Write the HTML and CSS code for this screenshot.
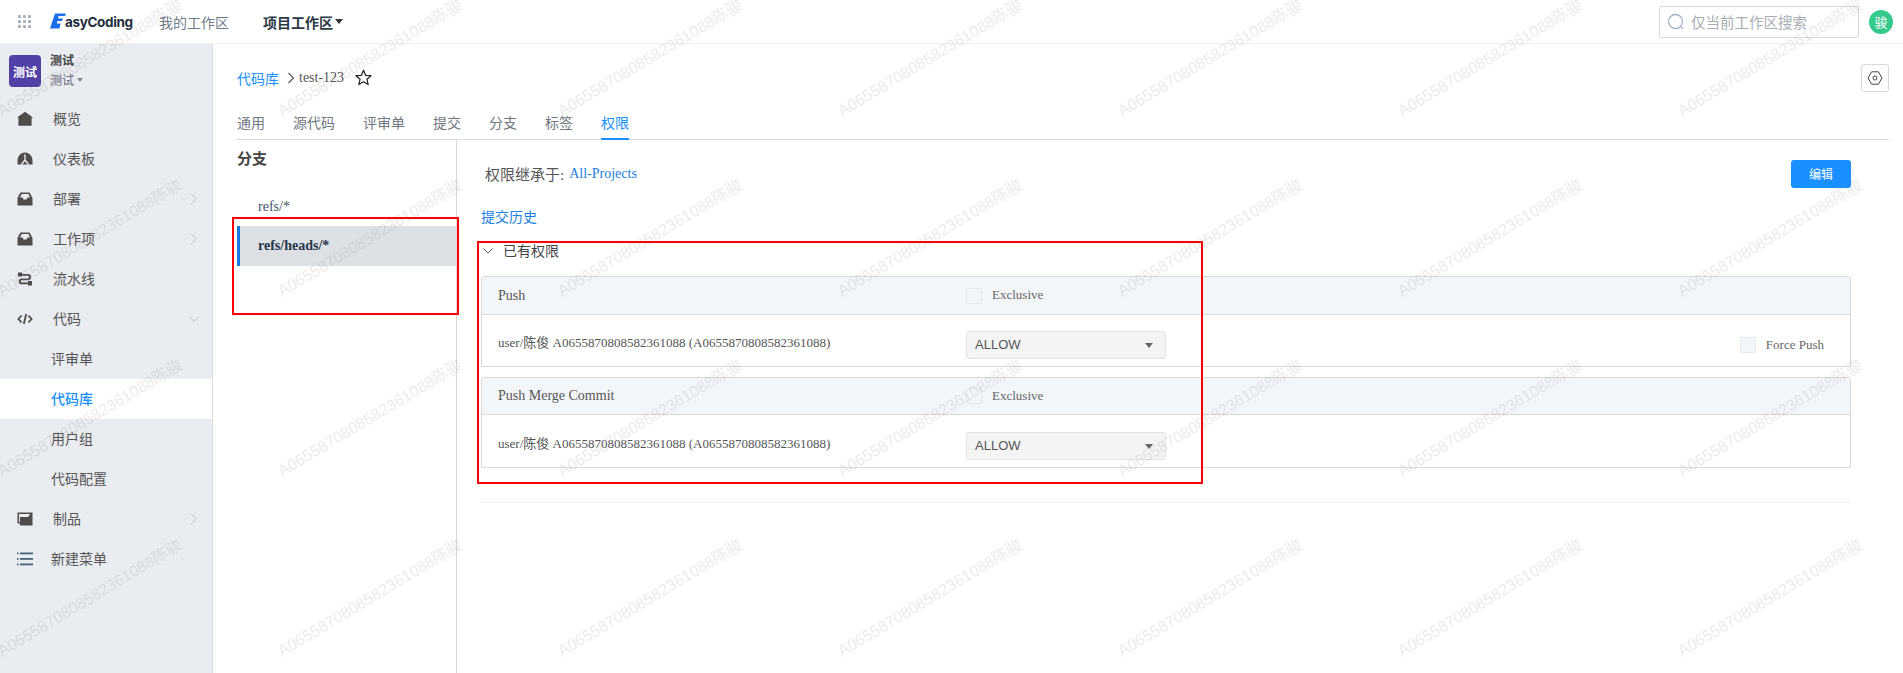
FILE: index.html
```html
<!DOCTYPE html>
<html lang="zh">
<head>
<meta charset="utf-8">
<title>EasyCoding</title>
<link rel="stylesheet" href="styles.css">
</head>
<body>
<div class="app">
  <header class="topbar">
    <svg class="apps" width="13" height="13" viewBox="0 0 13 13"><g fill="#a9b4bf"><rect x="0" y="0" width="3" height="3" rx=".6"/><rect x="5" y="0" width="3" height="3" rx=".6"/><rect x="10" y="0" width="3" height="3" rx=".6"/><rect x="0" y="5" width="3" height="3" rx=".6"/><rect x="5" y="5" width="3" height="3" rx=".6"/><rect x="10" y="5" width="3" height="3" rx=".6"/><rect x="0" y="10" width="3" height="3" rx=".6"/><rect x="5" y="10" width="3" height="3" rx=".6"/><rect x="10" y="10" width="3" height="3" rx=".6"/></g></svg>
    <div class="logo">
      <svg width="16" height="16" viewBox="0 0 16 16"><path fill="#1a6fe8" d="M5 0.5H16L15 3H8.6L8 5.6H13L12 8H7.4L6.8 10.4H10.5L9.5 15.5H0Z"/></svg>
      <span class="logo-text">asyCoding</span>
    </div>
    <a class="nav-link">我的工作区</a>
    <a class="nav-link nav-current">项目工作区<i class="caret caret-dark"></i></a>
    <div class="top-right">
      <div class="search">
        <svg width="18" height="18" viewBox="0 0 18 18" fill="none" stroke="#a3b3c6" stroke-width="1.3"><circle cx="8.5" cy="8.5" r="7"/><path d="M13.5 13.5L16 16"/></svg>
        <span>仅当前工作区搜索</span>
      </div>
      <div class="avatar">骏</div>
    </div>
  </header>
  <div class="body">
    <aside class="sidebar">
      <div class="project">
        <div class="project-logo">测试</div>
        <div class="project-info">
          <div class="project-name">测试</div>
          <div class="project-sub">测试<i class="caret caret-gray"></i></div>
        </div>
      </div>
      <nav class="menu">
        <a class="item"><svg class="icon" viewBox="0 0 16 16"><path d="M8 .8L16 6.4H14.6V14.8H1.4V6.4H0Z"/></svg>概览</a>
        <a class="item"><svg class="icon" viewBox="0 0 16 16"><path d="M.5 13.5V9A7.5 7.5 0 0 1 15.5 9V13.5Z"/><path d="M8 3.5V9L4.5 13.5M8 9L11.5 13.5" fill="none" stroke="#e9ecf0" stroke-width="1.4"/></svg>仪表板</a>
        <a class="item"><svg class="icon" viewBox="0 0 16 16"><path fill-rule="evenodd" d="M3.4 1.5H12.6L15.5 7V14.5H.5V7ZM4.6 3L3 6.6H5.6L6.4 8.6H9.6L10.4 6.6H13L11.4 3Z"/></svg>部署<svg class="chev" viewBox="0 0 8 12"><path d="M1 1L6.5 6L1 11"/></svg></a>
        <a class="item"><svg class="icon" viewBox="0 0 16 16"><path fill-rule="evenodd" d="M3.4 1.5H12.6L15.5 7V14.5H.5V7ZM4.6 3L3 6.6H5.6L6.4 8.6H9.6L10.4 6.6H13L11.4 3Z"/></svg>工作项<svg class="chev" viewBox="0 0 8 12"><path d="M1 1L6.5 6L1 11"/></svg></a>
        <a class="item"><svg class="icon" viewBox="0 0 16 16"><path d="M1 1.5H5V3H11A3.2 3.2 0 0 1 14 6A3.2 3.2 0 0 1 11 9.2H4.8A1.1 1.1 0 0 0 4.8 11.4H11V10H15V14.5H11V13.2H4.8A2.9 2.9 0 0 1 1.8 10.3A2.9 2.9 0 0 1 4.8 7.4H11A1.4 1.4 0 0 0 11 4.8H5V5.5H1Z"/></svg>流水线</a>
        <a class="item"><svg class="icon icon-code" viewBox="0 0 16 16"><path d="M4.6 4.5L1.4 8L4.6 11.5M11.4 4.5L14.6 8L11.4 11.5M9.2 3L6.8 13"/></svg>代码<svg class="chev chev-down" viewBox="0 0 12 8"><path d="M1 1L6 6.5L11 1"/></svg></a>
        <a class="item sub">评审单</a>
        <a class="item sub active">代码库</a>
        <a class="item sub">用户组</a>
        <a class="item sub">代码配置</a>
        <a class="item"><svg class="icon" viewBox="0 0 16 16"><path d="M.5 1.5H15.5V14.5H3V12.5H.5ZM2 3V11H3V6H11L13 3.2V3Z"/></svg>制品<svg class="chev" viewBox="0 0 8 12"><path d="M1 1L6.5 6L1 11"/></svg></a>
        <a class="item tight"><svg class="icon icon-list" viewBox="0 0 16 16"><rect x="0" y="1.5" width="1.5" height="1.8"/><rect x="3" y="1.5" width="13" height="1.8"/><rect x="0" y="7" width="1.5" height="1.8"/><rect x="3" y="7" width="13" height="1.8"/><rect x="0" y="12.5" width="1.5" height="1.8"/><rect x="3" y="12.5" width="13" height="1.8"/></svg>新建菜单</a>
      </nav>
    </aside>
    <main class="main">
      <div class="crumbs">
        <a class="link">代码库</a>
        <svg class="crumb-sep" width="8" height="12" viewBox="0 0 8 12"><path d="M1.5 1L6.5 6L1.5 11" fill="none" stroke="#555" stroke-width="1.2"/></svg>
        <span class="crumb-name">test-123</span>
        <svg class="star" width="17" height="17" viewBox="0 0 17 17"><path d="M8.5 1.3L10.6 6.3L16 6.7L11.9 10.2L13.2 15.6L8.5 12.7L3.8 15.6L5.1 10.2L1 6.7L6.4 6.3Z" fill="none" stroke="#222" stroke-width="1.2" stroke-linejoin="round"/></svg>
        <button class="gear"><svg width="16" height="14" viewBox="0 0 16 14" fill="none" stroke="#444" stroke-width="1"><path d="M4.6 .8H11.4L15 7L11.4 13.2H4.6L1 7Z" stroke-linejoin="round"/><circle cx="8" cy="7" r="2"/></svg></button>
      </div>
      <div class="tabs">
        <a class="tab">通用</a>
        <a class="tab">源代码</a>
        <a class="tab">评审单</a>
        <a class="tab">提交</a>
        <a class="tab">分支</a>
        <a class="tab">标签</a>
        <a class="tab tab-active">权限</a>
      </div>
      <div class="content">
        <section class="branches">
          <h2 class="branches-title">分支</h2>
          <div class="branch">refs/*</div>
          <div class="branch branch-active">refs/heads/*</div>
        </section>
        <section class="detail">
          <div class="inherit">
            <span class="inherit-label">权限继承于:</span>
            <a class="inherit-link">All-Projects</a>
            <button class="edit">编辑</button>
          </div>
          <a class="history">提交历史</a>
          <div class="collapse">
            <svg width="10" height="6" viewBox="0 0 10 6"><path d="M.5.5L5 5L9.5.5" fill="none" stroke="#555"/></svg>
            <span>已有权限</span>
          </div>
          <div class="perm">
            <div class="perm-head">
              <span class="perm-title">Push</span>
              <span class="check"></span><span class="check-label">Exclusive</span>
            </div>
            <div class="perm-row">
              <span class="perm-user">user/陈俊 A0655870808582361088 (A0655870808582361088)</span>
              <div class="select">ALLOW<i class="caret caret-select"></i></div>
              <div class="force"><span class="check"></span><span class="check-label">Force Push</span></div>
            </div>
          </div>
          <div class="perm perm-second">
            <div class="perm-head">
              <span class="perm-title">Push Merge Commit</span>
              <span class="check"></span><span class="check-label">Exclusive</span>
            </div>
            <div class="perm-row">
              <span class="perm-user">user/陈俊 A0655870808582361088 (A0655870808582361088)</span>
              <div class="select">ALLOW<i class="caret caret-select"></i></div>
            </div>
          </div>
          <div class="rule"></div>
        </section>
      </div>
    </main>
  </div>
</div>
<div class="mark mark-branch"></div>
<div class="mark mark-perm"></div>
<svg class="watermark" width="1903" height="673">
  <defs>
    <pattern id="wm" width="280" height="180" patternUnits="userSpaceOnUse">
      <text x="0" y="0" transform="translate(2 117) rotate(-31)" class="wm-text">A0655870808582361088陈骏</text>
    </pattern>
  </defs>
  <rect width="1903" height="673" fill="url(#wm)"/>
</svg>
</body>
</html>
```
FILE: styles.css
```css
* { box-sizing: border-box; }
html, body { margin: 0; height: 100%; overflow: hidden; }
body {
  font-family: "Liberation Serif", "Noto Sans CJK SC", serif;
  font-size: 14px;
  color: #555;
  background: #fff;
}
h2 { margin: 0; }
button { font: inherit; cursor: pointer; }

.app { display: flex; flex-direction: column; height: 673px; }

/* top bar */
.topbar {
  display: flex;
  align-items: center;
  height: 44px;
  flex: none;
  border-bottom: 1px solid #f0f0f0;
  padding-left: 18px;
}
.apps { flex: none; margin-right: 19px; }
.logo { display: flex; align-items: center; margin-top: -2px; width: 109px; }
.logo-text {
  font-family: Inter, "Liberation Sans", sans-serif;
  font-weight: 700;
  font-size: 13.5px;
  color: #1f2d3d;
  letter-spacing: -0.35px;
  margin-left: -1px;
  padding-top: 2px;
}
.nav-link {
  font-family: "Noto Sans CJK SC", sans-serif;
  font-size: 14px;
  color: #6f7c89;
  margin-right: 34px;
  display: flex;
  align-items: center;
}
.nav-current { font-weight: 700; color: #2c3a47; }
.caret {
  display: inline-block;
  width: 0;
  height: 0;
  border-style: solid;
  border-color: transparent;
  border-width: 5px 4.5px 0;
}
.caret-dark { border-top-color: #333; margin-left: 2px; }
.caret-gray { border-width: 4px 3.5px 0; border-top-color: #7e8a96; margin-left: 3px; }
.top-right { margin-left: auto; display: flex; align-items: center; padding-right: 10px; }
.search {
  width: 200px;
  height: 32px;
  border: 1px solid #d5d8dc;
  border-radius: 3px;
  display: flex;
  align-items: center;
  gap: 6px;
  padding-left: 7px;
  font-family: "Noto Sans CJK SC", sans-serif;
  font-size: 14.5px;
  color: #a8adb3;
}
.avatar {
  width: 24px;
  height: 24px;
  margin-left: 10px;
  border-radius: 50%;
  background: #36c98c;
  color: #fff;
  font-family: "Noto Sans CJK SC", sans-serif;
  font-size: 13px;
  display: flex;
  align-items: center;
  justify-content: center;
}

.body { display: flex; flex: 1; min-height: 0; }

/* sidebar */
.sidebar {
  width: 213px;
  flex: none;
  background: #e9ecf0;
  border-right: 1px solid #d8dde3;
  font-family: "Noto Sans CJK SC", sans-serif;
}
.project { display: flex; height: 55px; padding: 11px 0 0 9px; }
.project-logo {
  width: 32px;
  height: 32px;
  border-radius: 4px;
  background: #5140a6;
  color: #fff;
  font-size: 12px;
  font-weight: 700;
  display: flex;
  align-items: center;
  justify-content: center;
}
.project-info { margin-left: 9px; margin-top: -5px; }
.project-name { font-size: 12px; font-weight: 700; color: #444; line-height: 20px; }
.project-sub { font-size: 12px; color: #667; line-height: 20px; display: flex; align-items: center; }
.item {
  display: flex;
  align-items: center;
  height: 40px;
  padding: 0 0 3px 17px;
  color: #555;
  font-size: 14px;
}
.icon { width: 16px; height: 16px; fill: #4d4d4d; margin: 3px 20px 0 0; flex: none; }
.icon-code { fill: none; stroke: #4d4d4d; stroke-width: 1.8; }
.icon-list { fill: #47607a; width: 16px; }
.tight .icon { margin-right: 18px; }
.chev { width: 8px; height: 12px; fill: none; stroke: #bcc5ce; stroke-width: 1; margin: 3px 14px 0 auto; }
.chev-down { width: 12px; height: 8px; margin-right: 12px; }
.sub { padding-left: 51px; }
.active { background: #fff; color: #1890ff; font-weight: 500; }

/* main */
.main { flex: 1; min-width: 0; padding: 0 14px 0 24px; display: flex; flex-direction: column; }
.crumbs { display: flex; align-items: center; height: 28px; margin-top: 20px; flex: none; }
.link { color: #1890ff; font-family: "Noto Sans CJK SC", sans-serif; }
.crumb-sep { margin: 0 4px 0 8px; }
.crumb-name { color: #555; }
.star { margin-left: 11px; margin-top: -2px; }
.gear {
  margin-left: auto;
  width: 28px;
  height: 28px;
  padding: 0;
  background: #fff;
  border: 1px solid #d5d8dc;
  border-radius: 3px;
  display: flex;
  align-items: center;
  justify-content: center;
}
.tabs {
  display: flex;
  align-items: flex-end;
  gap: 28px;
  height: 48px;
  flex: none;
  border-bottom: 1px solid #d9d9d9;
  font-family: "Noto Sans CJK SC", sans-serif;
}
.tab { color: #6f7780; line-height: 20px; padding-bottom: 6px; margin-bottom: -1px; border-bottom: 2px solid transparent; height: 29px; padding-top: 1px; }
.tab-active { color: #1890ff; border-bottom-color: #1890ff; }
.content { display: flex; flex: 1; min-height: 0; }
.branches { width: 220px; flex: none; border-right: 1px solid #d9d9d9; }
.branches-title {
  font-family: "Noto Sans CJK SC", sans-serif;
  font-size: 15px;
  font-weight: 700;
  color: #444;
  line-height: 20px;
  height: 46px;
  padding-top: 8px;
}
.branch { height: 40px; line-height: 42px; padding-left: 21px; color: #3f5266; font-size: 14px; }
.branch-active { background: #dde1e5; border-left: 3px solid #1677e0; padding-left: 18px; color: #24354a; font-weight: 700; line-height: 40px; }

.detail { flex: 1; min-width: 0; padding: 20px 38px 0 24px; }
.inherit { display: flex; align-items: center; height: 28px; padding-left: 4px; }
.inherit-label { font-size: 15px; padding-bottom: 2px; color: #555; margin-right: 5px; }
.inherit-link { color: #1b80e4; }
.edit {
  margin-left: auto;
  width: 60px;
  height: 28px;
  padding: 0 0 2px;
  border: 0;
  border-radius: 3px;
  background: #1890ff;
  color: #fff;
  font-family: "Noto Sans CJK SC", sans-serif;
  font-size: 12px;
}
.history {
  display: block;
  margin-top: 18px;
  line-height: 20px;
  color: #1b80e4;
  font-family: "Noto Sans CJK SC", sans-serif;
}
.collapse {
  display: flex;
  align-items: center;
  gap: 10px;
  margin-top: 14px;
  height: 20px;
  padding-left: 2px;
  font-family: "Noto Sans CJK SC", sans-serif;
  color: #444;
}
.perm { margin-top: 16px; border: 1px solid #d9d9d9; border-radius: 3px 3px 0 0; }
.collapse svg { margin-top: 2px; }
.perm-second { margin-top: 10px; }
.perm-head {
  display: flex;
  align-items: center;
  height: 38px;
  padding-left: 16px;
  background: #f3f6f9;
  border-bottom: 1px solid #d9d9d9;
}
.perm-second .perm-head { height: 37px; }
.perm-title { width: 468px; flex: none; color: #555; }
.check { width: 16px; height: 16px; flex: none; background: #f3f6f9; border: 1px solid #e4e8ec; border-radius: 2px; }
.check-label { margin-left: 10px; font-size: 13px; color: #666; margin-top: -1px; }
.perm-row {
  display: flex;
  align-items: flex-start;
  height: 51px;
  padding: 16px 26px 0 16px;
}
.perm-second .perm-row { height: 52px; padding-top: 17px; }
.perm-user { width: 468px; flex: none; font-size: 13px; line-height: 20px; margin-top: 2px; color: #555; }
.select {
  width: 200px;
  height: 28px;
  padding: 0 8px 1px;
  display: flex;
  align-items: center;
  justify-content: space-between;
  background: #f4f4f4;
  border: 1px solid #e4e4e4;
  border-radius: 3px;
  font-family: "Liberation Sans", sans-serif;
  font-size: 13px;
  color: #555;
}
.caret-select { border-top-color: #666; border-width: 5px 4px 0; margin: 1px 4px 0 0; }
.force { margin-left: auto; display: flex; align-items: center; height: 28px; }
.force .check-label { margin-top: 0; }
.rule { margin-top: 34px; border-top: 1px solid #eee; }

/* annotations and overlay */
.mark { position: absolute; border: 2px solid #f00; pointer-events: none; }
.mark-branch { left: 232px; top: 217px; width: 227px; height: 98px; }
.mark-perm { left: 477px; top: 241px; width: 726px; height: 243px; }
.watermark { position: absolute; left: 0; top: 0; pointer-events: none; }
.wm-text {
  font-family: "Liberation Sans", "Noto Sans CJK SC", sans-serif;
  font-size: 16px;
  fill: rgba(120, 120, 120, 0.16);
}
```
